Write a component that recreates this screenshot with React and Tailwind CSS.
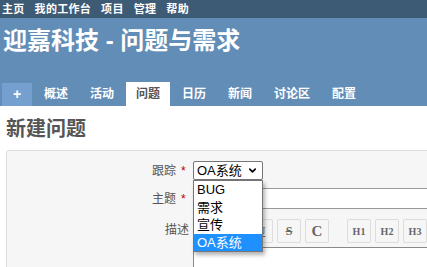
import { ChevronDown } from "lucide-react";

const font = { fontFamily: '"Liberation Sans", "Noto Sans CJK SC", sans-serif' };

const topMenu = ["主页", "我的工作台", "项目", "管理", "帮助"];
const tabs = ["概述", "活动", "问题", "日历", "新闻", "讨论区", "配置"];
const trackers = ["BUG", "需求", "宣传", "OA系统"];

function ToolButton({ children, className = "" }) {
  return (
    <span
      className={`grid h-6 w-6 shrink-0 place-items-center rounded-[2px] border border-[#dddddd] bg-[#f6f6f6] font-['Liberation_Serif',serif] font-bold text-[#666] ${className}`}
    >
      {children}
    </span>
  );
}

function Label({ text, required }) {
  return (
    <span className="flex w-[182px] shrink-0 items-center justify-end text-[#555]">
      <span>{text}</span>
      <span className={`ml-[5px] w-[8px] text-[#bb0000] ${required ? "" : "hidden"}`}>*</span>
    </span>
  );
}

export default function App() {
  return (
    <div className="h-[267px] w-[427px] overflow-hidden bg-white text-[#333]" style={font}>
      <div className="flex h-[18px] items-center gap-[10px] bg-[#3e5b76] pl-[2px] text-[11px] font-bold leading-none tracking-[0.3px] text-white">
        {topMenu.map((item) => (
          <span key={item}>{item}</span>
        ))}
      </div>
      <div className="h-[88px] bg-[#628db6] pl-[2px] pt-[8px] text-white">
        <h1 className="ml-[1px] text-[24px] font-bold leading-[30px]">迎嘉科技 - 问题与需求</h1>
        <div className="mt-[26px] flex items-end gap-[2px]">
          <span className="flex h-[23px] w-[30px] items-center justify-center bg-[#759fcf] text-[14px] font-bold">+</span>
          {tabs.map((tab) => (
            <span
              key={tab}
              className={`flex h-[24px] items-center px-[10px] text-[12px] font-bold ${
                tab === "问题" ? "bg-white text-[#555]" : "text-white"
              }`}
            >
              {tab}
            </span>
          ))}
        </div>
      </div>
      <div className="pl-[6px]">
        <h2 className="mt-[11px] text-[20px] font-bold leading-[24px] text-[#555]">新建问题</h2>
        <div className="mt-[9px] h-[200px] w-[440px] rounded-[3px] border border-[#dddddd] bg-[#f6f6f6] pt-[10px] text-[12px]">
          <div className="flex items-center">
            <Label text="跟踪" required />
            <div className="relative ml-[4px]">
              <div className="flex h-[19px] w-[70px] items-center justify-between rounded-[2px] border border-[#767676] bg-white pl-[3px] pr-[4px] text-[13px] text-black">
                <span>OA系统</span>
                <ChevronDown size={11} strokeWidth={3.5} />
              </div>
              <div className="absolute left-0 top-[19px] z-10 w-[70px] border border-[#767676] bg-white text-[13px] text-black shadow-[2px_3px_4px_rgba(0,0,0,0.3)]">
                {trackers.map((t) => (
                  <div
                    key={t}
                    className={`flex h-[17.5px] items-center pl-[3px] ${t === "OA系统" ? "bg-[#1e90ff] text-white" : ""}`}
                  >
                    {t}
                  </div>
                ))}
              </div>
            </div>
          </div>
          <div className="mt-[8px] flex items-center">
            <Label text="主题" required />
            <div className="ml-[4px] h-[21px] flex-1 border-y border-l border-[#999] bg-white" />
          </div>
          <div className="mt-[10px] flex">
            <span className="w-[182px] shrink-0 pt-[2px] text-right text-[#555]">描述</span>
            <div className="ml-[4px] flex-1">
              <div className="flex gap-[4px]">
                <ToolButton>B</ToolButton>
                <ToolButton className="italic">I</ToolButton>
                <ToolButton className="underline">U</ToolButton>
                <ToolButton className="line-through">S</ToolButton>
                <ToolButton className="text-[15px]">C</ToolButton>
                <span className="w-[10px]" />
                <ToolButton className="text-[10px]">H1</ToolButton>
                <ToolButton className="text-[10px]">H2</ToolButton>
                <ToolButton className="text-[10px]">H3</ToolButton>
              </div>
              <div className="mt-[4px] h-[40px] border-l border-t border-[#888] bg-white" />
            </div>
          </div>
        </div>
      </div>
    </div>
  );
}
